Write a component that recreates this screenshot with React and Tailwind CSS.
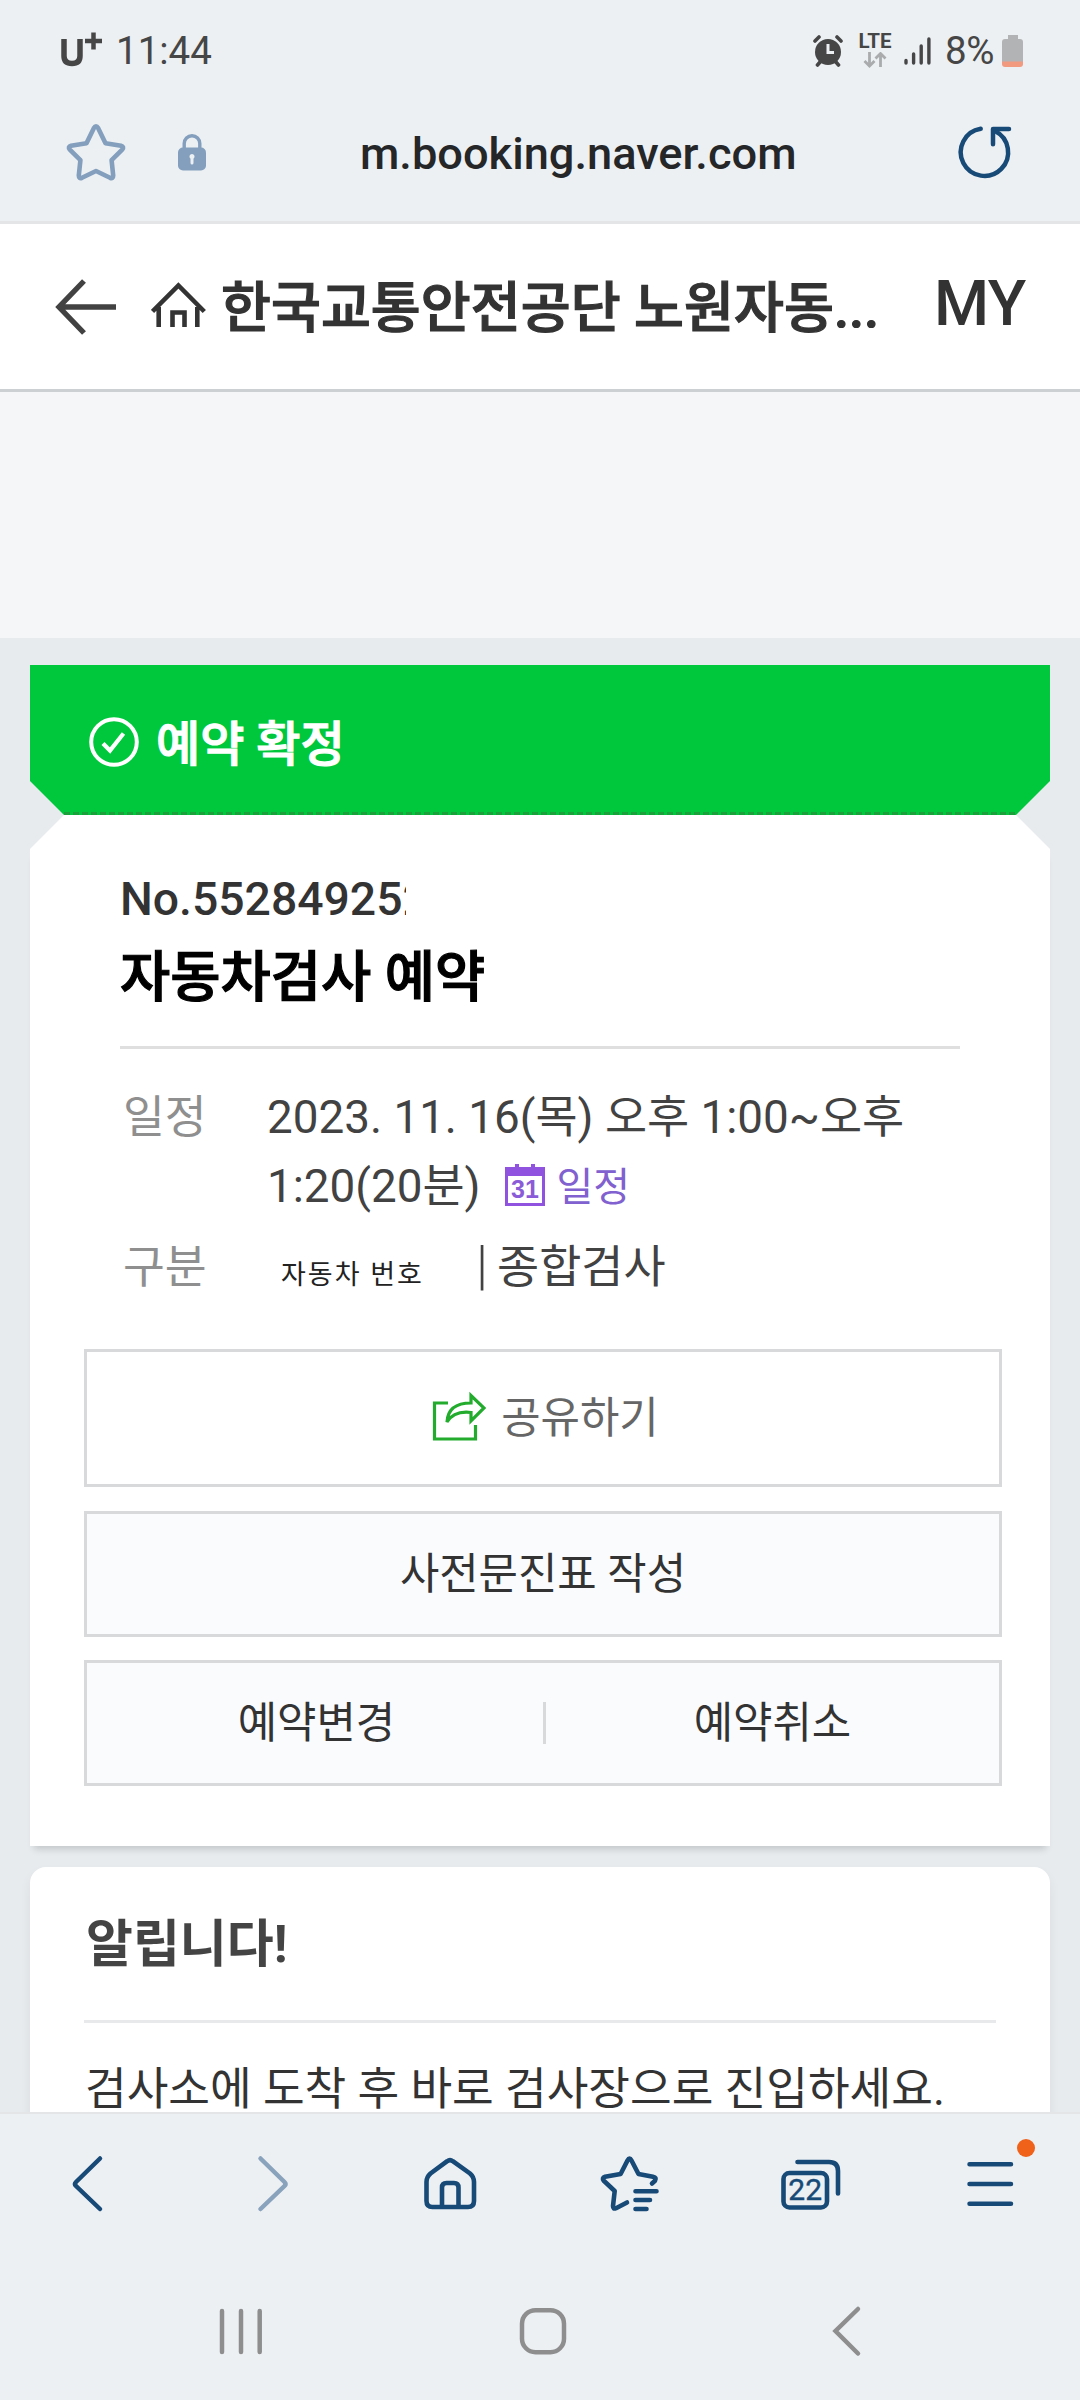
import React from 'react'

const details = {
    number: "No.552849252",
    title: "자동차검사 예약",
    schedule: "2023. 11. 16(목) 오후 1:00~오후",
    scheduleEnd: "1:20(20분)",
}

function StatusBar() {
    return (
        <div className="flex h-[102px] shrink-0 items-center pl-[59px] text-[38.500px] leading-[44px] text-[#464646]">
            <div className="flex w-[57px] items-center pb-[4px]">
                <svg width="44" height="36" viewBox="0 0 44 36" fill="none" stroke="#464646">
                    <path d="M5 8v17q0 7.500 8 7.500t8-7.500V8" strokeWidth="5.500" />
                    <path d="M26 10h17M34.500 1.500v17" strokeWidth="4.500" />
                </svg>
            </div>
            <span className="w-[697px]">11:44</span>
            <svg width="30" height="32" viewBox="0 0 30 32" fill="none">
                <circle cx="15" cy="17" r="13" fill="#464646" />
                <path d="M2 6l4-4M28 6l-4-4M4.500 30l3-3.500M25.500 30l-3-3.500" stroke="#464646" strokeWidth="3.600" strokeLinecap="round" />
                <path d="M15 9v8.500h6" stroke="#ecf0f3" strokeWidth="3" />
            </svg>
            <div className="ml-[15px] mb-[2px] flex w-[34px] flex-col items-center">
                <span className="text-[20.500px] font-bold leading-[18px]">LTE</span>
                <svg className="mt-[2px]" width="24" height="16" viewBox="0 0 24 16" fill="none" stroke="#a9abad" strokeWidth="2.800">
                    <path d="M6.500 0v13.500M1.500 9l5 5 5-5M17.500 15V2M12.500 6.500l5-5 5 5" />
                </svg>
            </div>
            <svg className="ml-[12px]" width="27" height="30" viewBox="0 0 27 30" stroke="#464646" strokeWidth="3.400" strokeLinecap="round">
                <path d="M2 24.500v2.500M9.600 18v9M17.200 10v17M24.900 3v24" />
            </svg>
            <span className="ml-[14px] w-[57px] tracking-[-0.500px]">8%</span>
            <svg width="22" height="32" viewBox="0 0 22 32">
                <path d="M6 0h10v4h2q3 0 3 3v20H0V7q0-3 3-3h3z" fill="#b2b3b4" />
                <path d="M0 26.500h21V29q0 3-3 3H3q-3 0-3-3z" fill="#f19a80" />
            </svg>
        </div>
    )
}

function UrlBar() {
    return (
        <div className="flex h-[122px] shrink-0 items-center border-b-[3px] border-[#e3e5e7] pb-[19px] pl-[64px]">
            <svg width="64" height="64" viewBox="0 0 64 64" fill="none" stroke="#839fbd" strokeWidth="4.600" strokeLinejoin="round">
                <path d="M29.800 8.200q2.200-4 4.400 0L41.500 23.300 57 25.700q3.500 1 1.200 4L47.600 40.200 49.200 55.600q0 3.600-3.200 2.200L32 51 18 57.800q-3.200 1.400-3.200-2.200L16.400 40.200 5.800 29.700q-2.300-3 1.200-4L22.500 23.300z" />
            </svg>
            <svg className="ml-[50px]" width="28" height="38" viewBox="0 0 28 38">
                <path d="M6.200 16V10.500a7.800 7.800 0 0 1 15.600 0V16" fill="none" stroke="#839fbd" strokeWidth="3.400" />
                <rect y="14.500" width="28" height="23" rx="5" fill="#839fbd" />
                <path d="M14 21a2.600 2.600 0 0 1 1.500 4.700V30q0 1.500-1.500 1.500T12.500 30v-4.300A2.600 2.600 0 0 1 14 21z" fill="#ecf0f3" />
            </svg>
            <span className="ml-[154px] mt-[3px] w-[594px] text-[45.200px] font-medium leading-[54px] text-[#252628]">m.booking.naver.com</span>
            <svg width="60" height="60" viewBox="0 0 60 60" fill="none" stroke="#184a78" strokeWidth="4.500" strokeLinecap="round" strokeLinejoin="round">
                <path d="M26.700 6.800A23.700 23.700 0 1 0 41 9" />
                <path d="M39 22.300V7H55" />
            </svg>
        </div>
    )
}

function PageHeader() {
    return (
        <div className="flex h-[168px] shrink-0 items-center border-b-[3px] border-[#cdd0d3] bg-white pl-[55px] text-[#333]">
            <svg width="62" height="56" viewBox="0 0 62 56" fill="none" stroke="#424242" strokeWidth="5.400">
                <path d="M29 2L4 28l25 26M4 28h57" />
            </svg>
            <svg className="ml-[34px]" width="55" height="50" viewBox="0 0 55 50" fill="none" stroke="#333" strokeWidth="4.600">
                <path d="M1.500 29.500L27.400 3.500l25.900 26M7.700 25v20M46.300 25v20M21.500 45V30.500h12V45" />
            </svg>
            <h1 className="ml-[15px] mt-[4px] w-[713px] text-[54.300px] font-medium leading-[70px] whitespace-nowrap [-webkit-text-stroke:1.2px_#333]">한국교통안전공단 노원자동...</h1>
            <span className="mb-[6px] text-[63px] font-medium leading-[70px] tracking-[-0.500px]">MY</span>
        </div>
    )
}

function BookingCard() {
    return (
        <section>
            <div className="flex h-[150px] flex-col bg-[#00c83c] [clip-path:polygon(0_0,100%_0,100%_116px,986px_100%,34px_100%,0_116px)]">
                <div className="flex h-[147px] items-center pt-[7px] pl-[58px]">
                    <svg width="52" height="52" viewBox="0 0 52 52" fill="none" stroke="#fff">
                        <circle cx="26" cy="26" r="22.800" strokeWidth="4" />
                        <path d="M15 27.500l7 7 13.500-17" strokeWidth="4.200" />
                    </svg>
                    <span className="ml-[16px] mt-[5px] text-[48px] font-medium leading-[60px] text-white [-webkit-text-stroke:1.2px_#fff]">예약 확정</span>
                </div>
                <div className="mx-[34px] h-[2.500px] bg-[repeating-linear-gradient(90deg,#1ba03c_0_6px,#00c83c_6px_9px)]" />
            </div>
            <div className="h-[34px] bg-white [clip-path:polygon(34px_0,986px_0,100%_100%,0_100%)]" />
            <div className="h-[997px] bg-white pt-[20px] text-[45.800px] leading-[69px] text-[#424242] shadow-[0_7px_7px_-4px_rgba(0,0,0,0.16)]">
                <div className="mx-[90px]">
                    <p className="relative text-[46.300px] font-medium leading-[60px] text-[#333]">
                        {details.number}
                        <span className="absolute top-0 left-[286px] h-full w-[40px] bg-white" />
                    </p>
                    <h2 className="mt-[13px] text-[54.600px] font-medium leading-[70px] text-black [-webkit-text-stroke:1.2px_#000]">{details.title}</h2>
                    <div className="mt-[34px] h-[3px] bg-[#dfdfdf]" />
                    <div className="mt-[34px] flex">
                        <span className="w-[147px] pl-[3px] text-[45.500px] text-[#8f8f8f]">일정</span>
                        <div className="whitespace-nowrap">
                            <p>{details.schedule}</p>
                            <p className="flex h-[69px] items-center">
                                {details.scheduleEnd}
                                <svg className="ml-[24px] mb-[4px]" width="40" height="44" viewBox="0 0 40 44">
                                    <path d="M0 4h10V1h4v3h12V1h4v3h10v39H0zM3 13v27h34V13z" fill="#8f53e0" fillRule="evenodd" />
                                    <text x="20" y="35" textAnchor="middle" fontSize="25" fontWeight="700" fontFamily="Liberation Sans, sans-serif" fill="#8a5cd8">31</text>
                                </svg>
                                <span className="ml-[12px] mt-[3px] text-[40px] leading-[60px] text-[#8061cf]">일정</span>
                            </p>
                        </div>
                    </div>
                    <div className="mt-[12px] flex h-[69px]">
                        <span className="w-[147px] pl-[3px] text-[45.500px] text-[#8f8f8f]">구분</span>
                        <span className="w-[209px] pl-[14px] pt-[8px] text-[27px] tracking-[2px] text-[#222]">자동차 번호</span>
                        <span className="w-[21px] text-[54px] font-light leading-[63px]">|</span>
                        <span>종합검사</span>
                    </div>
                </div>
                <div className="mt-[47px] ml-[54px] flex w-[918px] flex-col text-[42.800px] text-[#333]">
                    <button className="flex h-[138px] items-center justify-center border-[3px] border-[#d8d9da] pl-[4px] text-[#666]">
                        <svg className="mb-[5px]" width="55" height="50" viewBox="0 0 55 50" fill="none" stroke="#23ab2d" strokeWidth="3.200">
                            <path d="M17 12H3.500v36h41V34" />
                            <path d="M16 31q1-19 24-19V4.500L53 17 40 30v-8.500q-17-2-24 9.500z" />
                        </svg>
                        <span className="ml-[15px] pt-[1px]">공유하기</span>
                    </button>
                    <button className="mt-[24px] h-[126px] border-[3px] border-[#d8d9da] bg-[#fafbfd] pt-[1px]">사전문진표 작성</button>
                    <div className="mt-[23px] flex h-[126px] items-center border-[3px] border-[#d8d9da] bg-[#fafbfd]">
                        <button className="flex-1 pt-[1px] pl-[3px]">예약변경</button>
                        <div className="h-[42px] w-[3px] bg-[#d8d9da]" />
                        <button className="flex-1 pt-[1px]">예약취소</button>
                    </div>
                </div>
            </div>
        </section>
    )
}

function NoticeCard() {
    return (
        <section className="mt-[21px] h-[400px] rounded-[16px] bg-white px-[54px] pt-[48px] shadow-[0_6px_12px_rgba(0,0,0,0.06)]">
            <h3 className="pl-[2px] text-[51px] font-bold leading-[60px] text-[#444]">알립니다!</h3>
            <div className="mt-[45px] h-[3px] bg-[#e8e9ea]" />
            <p className="mt-[45px] pl-[1px] text-[45.300px] leading-[44px] whitespace-nowrap text-[#333]">검사소에 도착 후 바로 검사장으로 진입하세요.</p>
        </section>
    )
}

function BrowserToolbar() {
    return (
        <div className="grid h-[142px] shrink-0 grid-cols-6 place-items-center border-t-2 border-[#e3e5e7] [&_svg]:h-[72px] [&_svg]:w-[72px] [&_svg]:overflow-visible">
            <svg viewBox="0 0 72 72" fill="none" stroke="#184a78" strokeWidth="4.500" strokeLinecap="round">
                <path d="M46 10.500L22 34q-2 2 0 4L46 61" />
            </svg>
            <svg viewBox="0 0 72 72" fill="none" stroke="#8aa3bd" strokeWidth="4.500" strokeLinecap="round">
                <path d="M26.500 10.500L50.500 34q2 2 0 4L26.500 61" />
            </svg>
            <svg viewBox="0 0 72 72" fill="none" stroke="#184a78" strokeWidth="4.600">
                <path d="M12.500 34q0-5 4-8.500L33.200 13.200q2.800-2.200 5.600 0L56 25.500q4 3.500 4 8.500v19q0 6-6 6H18.500q-6 0-6-6z" />
                <path d="M28 59V39.500q0-4.500 4.500-4.500h7.500q4.500 0 4.500 4.500V59" />
            </svg>
            <svg viewBox="0 0 72 72" fill="none" stroke="#184a78" strokeWidth="4.600" strokeLinecap="round" strokeLinejoin="round">
                <path d="M58 35.500l3-2.700q2-3.300-2-4L44.500 26 37.500 12.500q-2-4-4 0L26.600 26 11 28.800q-3.500 1-1.200 4L20.700 43 19 58q0 3.500 3 2.200L33 54.500" />
                <path d="M41.500 43.300H62.500M41.500 52H56M41.500 61H52.500" />
            </svg>
            <svg viewBox="0 0 72 72" fill="none" stroke="#184a78" strokeWidth="4.600" strokeLinecap="round">
                <rect x="9.500" y="25" width="43.500" height="34.500" rx="6" />
                <path d="M23.500 14H55q9 0 9 9v22.500" />
                <text x="31.200" y="51.800" textAnchor="middle" fontSize="30" fill="#184a78" stroke="#184a78" strokeWidth="0.400">22</text>
            </svg>
            <svg viewBox="0 0 72 72" fill="none" stroke="#184a78" strokeWidth="4.500" strokeLinecap="round">
                <path d="M15.500 16.300H57M15.500 36H57M15.500 55.700H57" />
                <circle cx="72" cy="0" r="9" fill="#f0611a" stroke="none" />
            </svg>
        </div>
    )
}

function SystemNav() {
    return (
        <div className="flex h-[146px] shrink-0 items-center gap-[242px] pt-[8px] pl-[211px]">
            <svg width="60" height="60" viewBox="0 0 60 60" stroke="#8e8e8e" strokeWidth="4.500" strokeLinecap="round">
                <path d="M11 10v41M30 10v41M48.700 10v41" />
            </svg>
            <svg width="60" height="60" viewBox="0 0 60 60" fill="none" stroke="#8e8e8e" strokeWidth="4.500">
                <rect x="9" y="9.200" width="42" height="42" rx="13.500" />
            </svg>
            <svg width="60" height="60" viewBox="0 0 60 60" fill="none" stroke="#8e8e8e" strokeWidth="4.500" strokeLinecap="round">
                <path d="M43 8L20.500 30 43 52.500" />
            </svg>
        </div>
    )
}

function App() {
    return (
        <div className="flex h-[2400px] w-[1080px] flex-col overflow-hidden bg-[#ecf0f3] font-[Roboto,'Noto_Sans_CJK_KR',sans-serif]">
            <StatusBar />
            <UrlBar />
            <PageHeader />
            <div className="h-[246px] shrink-0 bg-[#f5f6f8]" />
            <main className="h-[1474px] shrink-0 overflow-hidden bg-[#e7ebee] px-[30px] pt-[27px]">
                <BookingCard />
                <NoticeCard />
            </main>
            <BrowserToolbar />
            <SystemNav />
        </div>
    )
}

export default App
